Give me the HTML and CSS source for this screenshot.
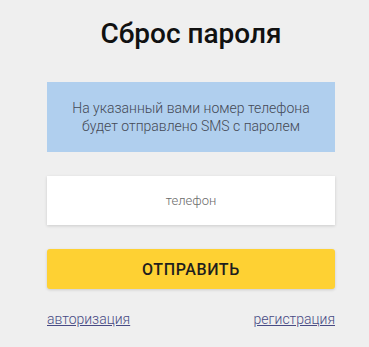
FILE: index.html
```html
<!DOCTYPE html>
<html lang="ru">
<head>
    <meta charset="UTF-8">
    <meta name="viewport" content="width=device-width, initial-scale=1.0">
    <title>Сброс пароля</title>
    <link rel="stylesheet" href="styles.css">
</head>
<body>
    <div class="reset">
        <h1>Сброс пароля</h1>

        <div class="notice">
            На указанный вами номер телефона<br>
            будет отправлено SMS с паролем
        </div>

        <input type="tel" class="phone-input" placeholder="телефон">

        <button class="send-button">Отправить</button>

        <div class="links">
            <a href="#">авторизация</a>
            <a href="#">регистрация</a>
        </div>
    </div>
</body>
</html>
```

FILE: styles.css
```css
body {
    margin: 0;
    padding: 0;
    background-color: #efefef;
    font-family: Roboto, "Liberation Sans", sans-serif;
}

.reset {
    width: 288px;
    margin-left: 47px;
    padding-top: 15px;
    display: flex;
    flex-direction: column;
}

.reset h1 {
    margin: 0;
    font-size: 28px;
    font-weight: 500;
    line-height: 38px;
    text-align: center;
    color: #111;
}

/* Notice block */
.notice {
    margin-top: 29px;
    height: 70px;
    background-color: #b0cfee;
    color: #444955;
    font-size: 14px;
    font-weight: 300;
    line-height: 18px;
    text-align: center;
    display: flex;
    align-items: center;
    justify-content: center;
}

/* Phone input */
.phone-input {
    margin-top: 24px;
    height: 47px;
    border: none;
    background-color: #fff;
    box-shadow: 0 1px 3px rgba(0, 0, 0, 0.15);
    font-family: inherit;
    font-size: 13px;
    font-weight: 300;
    text-align: center;
    outline: none;
}

.phone-input::placeholder {
    color: #6a6a6a;
}

/* Send button */
.send-button {
    margin-top: 24px;
    height: 40px;
    border: none;
    border-radius: 3px;
    background-color: #fed133;
    box-shadow: 0 1px 3px rgba(0, 0, 0, 0.15);
    color: #1e1e1e;
    font-family: inherit;
    font-size: 16px;
    font-weight: 500;
    letter-spacing: 0.6px;
    text-transform: uppercase;
    cursor: pointer;
}

.links {
    margin-top: 22px;
    display: flex;
    justify-content: space-between;
}

.links a {
    color: #474a84;
    font-size: 14px;
    font-weight: 300;
}
```
